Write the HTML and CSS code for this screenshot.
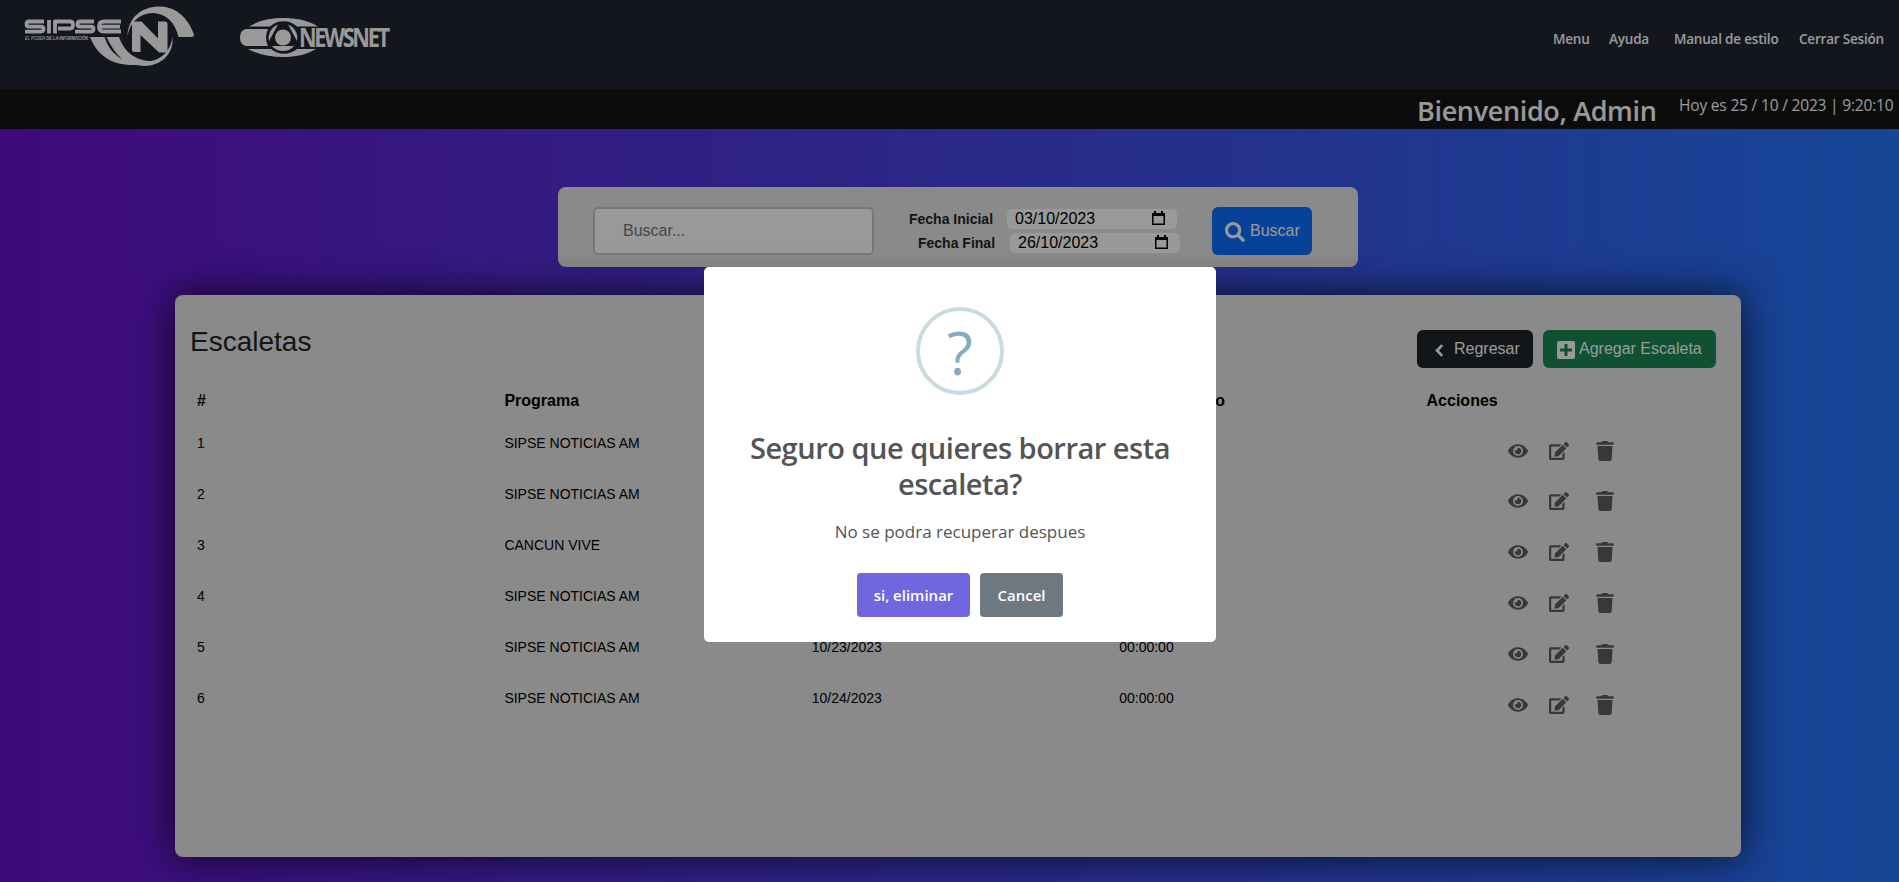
FILE: index.html
```html
<!DOCTYPE html>
<html lang="es">
<head>
<meta charset="utf-8">
<title>Escaletas</title>
<link rel="stylesheet" href="styles.css">
</head>
<body>
<svg width="0" height="0" class="defs">
  <symbol id="eye" viewBox="0 0 576 512"><path d="M572.5 241.400C518.300 135.600 410.900 64 288 64S57.700 135.600 3.500 241.400a32.350 32.350 0 0 0 0 29.200C57.700 376.400 165.100 448 288 448s230.300-71.600 284.500-177.400a32.350 32.350 0 0 0 0-29.200zM288 400a144 144 0 1 1 144-144 143.930 143.930 0 0 1-144 144zm0-240a95.300 95.300 0 0 0-25.300 3.800 47.850 47.850 0 0 1-66.900 66.900A95.800 95.800 0 1 0 288 160z"/></symbol>
  <symbol id="edit" viewBox="0 0 576 512"><path d="M402.600 83.200l90.200 90.200c3.800 3.800 3.800 10 0 13.800L274.400 405.600l-92.800 10.300c-12.400 1.400-22.900-9.100-21.500-21.500l10.300-92.800L388.800 83.200c3.800-3.800 10-3.800 13.800 0zm162-22.900l-48.800-48.800c-15.200-15.200-39.900-15.200-55.200 0l-35.400 35.400c-3.800 3.800-3.800 10 0 13.800l90.200 90.200c3.800 3.800 10 3.800 13.800 0l35.400-35.400c15.200-15.300 15.200-40 0-55.200zM384 346.200V448H64V128h229.800c3.200 0 6.200-1.300 8.500-3.500l40-40c7.600-7.600 2.200-20.500-8.500-20.500H48C21.500 64 0 85.500 0 112v352c0 26.500 21.500 48 48 48h352c26.500 0 48-21.500 48-48V306.200c0-10.700-12.900-16-20.500-8.500l-40 40c-2.200 2.300-3.500 5.300-3.500 8.500z"/></symbol>
  <symbol id="trash" viewBox="0 0 448 512"><path d="M432 32H312l-9.400-18.700A24 24 0 0 0 281.100 0H166.800a23.720 23.720 0 0 0-21.400 13.300L136 32H16A16 16 0 0 0 0 48v32a16 16 0 0 0 16 16h416a16 16 0 0 0 16-16V48a16 16 0 0 0-16-16zM53.200 467a48 48 0 0 0 47.900 45h245.800a48 48 0 0 0 47.900-45L416 128H32z"/></symbol>
</svg>

<header class="navbar">
  <svg class="logo-sipse" viewBox="0 0 190 72" fill="#fff">
    <g fill="none" stroke="#fff" stroke-width="3.800" stroke-linejoin="round">
      <path d="M29 21.500H14q-2.500 0-2.500 2.600t2.500 2.600h12q2.500 0 2.500 2.400t-2.500 2.500H10"/>
      <path d="M34 20v13.500M40 33.500v-12H55q3 0 3 3.500t-3 3.500H43"/>
      <path d="M79 21.500H65q-2.500 0-2.500 2.600t2.500 2.600h11q2.500 0 2.500 2.400t-2.500 2.500H60"/>
      <path d="M106 21.500H89q-5 0-5 5t5 5h17M85 26.600h20"/>
    </g>
    <text x="10" y="40.300" class="logo-tag" textLength="63" lengthAdjust="spacingAndGlyphs">EL PODER <tspan font-weight="700">DE LA INFORMACIÓN</tspan></text>
    <path d="M112.500 36C113 17 127 6.500 145 6.500C163 7 174 20 179 34.500Q179 37 176 37H163.500C160 22 151 13 137 13C124 14 115 22 112.500 36Z"/>
    <path d="M75 37H89.500C93 47 98 54 107 59Q98 51 91.500 37H104C109 52 121 61 136 61C148 59 156 49 157.500 37C159 54 146 66 129 66Q123 65 118 65C96 65 82 55 75 37Z"/>
    <path d="M117 50V24q0-2.500 2.500-2.500h7l16.500 17V21.500H150q2.500 0 2.500 2.500v26q0 2.500-2.500 2.500h-6L125.500 35V52h-6q-2.500 0-2.500-2Z"/>
  </svg>
  <svg class="logo-newsnet" viewBox="0 0 170 55" fill="#fff">
    <path d="M19 16.500C30 10 41 8 53 8s25 2 35 8.500H67A20 20 0 0 0 40 16.500ZM18 39H41A20 20 0 0 0 67 39H86C76 45 65 47 53 47S29 45 18 39ZM16 19H38A20 20 0 0 0 38 36H16Q10 35 10 27.500T16 19Z"/>
    <path d="M48 14.500L39 31A14.500 14.500 0 0 1 48 14.500ZM58 14.500L67 31A14.500 14.500 0 0 0 58 14.500ZM42 36H64Q60 41 53 41T42 36Z"/>
    <circle cx="53" cy="27.500" r="8"/>
    <text transform="translate(69 36.700) scale(.82 1)" class="logo-word" textLength="111" lengthAdjust="spacing">NEWSNET</text>
  </svg>
  <nav class="nav">
    <a style="width:36px">Menu</a><a style="width:41px">Ayuda</a><a style="width:105px">Manual de estilo</a><a style="width:84px">Cerrar Sesión</a>
  </nav>
</header>

<div class="welcome">
  <h2>Bienvenido, Admin</h2>
  <span>Hoy es 25 / 10 / 2023 | 9:20:10</span>
</div>

<main>
  <form class="search">
    <div class="query">Buscar...</div>
    <div class="dates">
      <div class="date-row"><b>Fecha Inicial</b><span class="date">03/10/2023<svg viewBox="0 0 13 15"><path d="M0 2h2V0h2v2h5V0h2v2h2v12H0zM1.500 5v7.500h10V5z" fill-rule="evenodd"/></svg></span></div>
      <div class="date-row second"><b>Fecha Final</b><span class="date">26/10/2023<svg viewBox="0 0 13 15"><path d="M0 2h2V0h2v2h5V0h2v2h2v12H0zM1.500 5v7.500h10V5z" fill-rule="evenodd"/></svg></span></div>
    </div>
    <div class="btn find"><svg viewBox="0 0 512 512"><path d="M505 442.700L405.300 343c-4.500-4.500-10.600-7-17-7H372c27.600-35.300 44-79.700 44-128C416 93.100 322.900 0 208 0S0 93.100 0 208s93.100 208 208 208c48.300 0 92.700-16.400 128-44v16.300c0 6.400 2.500 12.500 7 17l99.700 99.700c9.400 9.400 24.600 9.400 33.900 0l28.300-28.300c9.400-9.400 9.400-24.600.1-34zM208 336c-70.700 0-128-57.200-128-128 0-70.700 57.200-128 128-128 70.700 0 128 57.200 128 128 0 70.700-57.200 128-128 128z"/></svg>Buscar</div>
  </form>

  <section class="card">
    <div class="card-head">
      <h1>Escaletas</h1>
      <div class="buttons">
        <div class="btn back"><svg viewBox="0 0 8 12"><path d="M6.500 1L1.700 6l4.800 5" fill="none" stroke="#fff" stroke-width="2.500"/></svg>Regresar</div>
        <div class="btn add"><svg viewBox="0 0 18 18"><path fill-rule="evenodd" d="M2 0h14q2 0 2 2v14q0 2-2 2H2q-2 0-2-2V2q0-2 2-2zM7.500 3v4.500H3v3h4.500V15h3v-4.500H15v-3h-4.500V3z"/></svg>Agregar Escaleta</div>
      </div>
    </div>
    <table>
      <thead><tr><th>#</th><th>Programa</th><th>Fecha</th><th>Hora de Inicio</th><th>Acciones</th></tr></thead>
      <tbody>
        <tr><td>1</td><td>SIPSE NOTICIAS AM</td><td>10/19/2023</td><td>00:00:00</td><td class="actions"><div><svg class="eye"><use href="#eye"/></svg><svg class="edit"><use href="#edit"/></svg><svg class="trash"><use href="#trash"/></svg></div></td></tr>
        <tr><td>2</td><td>SIPSE NOTICIAS AM</td><td>10/20/2023</td><td>00:00:00</td><td class="actions"><div><svg class="eye"><use href="#eye"/></svg><svg class="edit"><use href="#edit"/></svg><svg class="trash"><use href="#trash"/></svg></div></td></tr>
        <tr><td>3</td><td>CANCUN VIVE</td><td>10/20/2023</td><td>00:00:00</td><td class="actions"><div><svg class="eye"><use href="#eye"/></svg><svg class="edit"><use href="#edit"/></svg><svg class="trash"><use href="#trash"/></svg></div></td></tr>
        <tr><td>4</td><td>SIPSE NOTICIAS AM</td><td>10/23/2023</td><td>00:00:00</td><td class="actions"><div><svg class="eye"><use href="#eye"/></svg><svg class="edit"><use href="#edit"/></svg><svg class="trash"><use href="#trash"/></svg></div></td></tr>
        <tr><td>5</td><td>SIPSE NOTICIAS AM</td><td>10/23/2023</td><td>00:00:00</td><td class="actions"><div><svg class="eye"><use href="#eye"/></svg><svg class="edit"><use href="#edit"/></svg><svg class="trash"><use href="#trash"/></svg></div></td></tr>
        <tr><td>6</td><td>SIPSE NOTICIAS AM</td><td>10/24/2023</td><td>00:00:00</td><td class="actions"><div><svg class="eye"><use href="#eye"/></svg><svg class="edit"><use href="#edit"/></svg><svg class="trash"><use href="#trash"/></svg></div></td></tr>
      </tbody>
    </table>
  </section>
</main>

<div class="overlay">
  <div class="modal">
    <div class="question">?</div>
    <h2>Seguro que quieres borrar esta<br>escaleta?</h2>
    <p>No se podra recuperar despues</p>
    <div class="modal-actions"><button class="confirm">si, eliminar</button><button class="cancel">Cancel</button></div>
  </div>
</div>
</body>
</html>
```
FILE: styles.css
```css
* { box-sizing: border-box; }
body {
  margin: 0;
  height: 882px;
  overflow: hidden;
  display: flex;
  flex-direction: column;
  font-family: "Liberation Sans", Arial, sans-serif;
  font-size: 16px;
  color: #212529;
  background: #2575fc;
}
h1, h2, p { margin: 0; }
.defs { position: absolute; }

.navbar {
  height: 89px;
  flex: none;
  display: flex;
  align-items: flex-start;
  padding-left: 15px;
  background: #212631;
}
.logo-sipse { width: 190px; height: 72px; }
.logo-newsnet { width: 170px; height: 55px; margin: 10px 0 0 25px; overflow: visible; }
.logo-tag { font: italic 4.500px "Liberation Sans", sans-serif; }
.logo-word { font: 700 26.500px "Open Sans", sans-serif; }
.nav {
  margin-left: auto;
  padding: 29px 16px 0 0;
  display: flex;
  font: 600 13.500px/20px "Open Sans", sans-serif;
  letter-spacing: -0.200px;
  color: #fff;
  white-space: nowrap;
}
.nav a { margin-left: 20px; }
.nav a:nth-child(3) { margin-left: 24px; }

.welcome {
  height: 40px;
  flex: none;
  display: flex;
  justify-content: flex-end;
  padding-right: 6px;
  color: #fff;
  background: #151515;
  font-family: "Open Sans", sans-serif;
  white-space: nowrap;
}
.welcome h2 { font-size: 27px; font-weight: 600; line-height: 44px; width: 241px; letter-spacing: -0.350px; }
.welcome span { width: 214px; margin-left: 21px; font-size: 15.500px; line-height: 33px; letter-spacing: -0.180px; }

main {
  flex: 1;
  display: flex;
  flex-direction: column;
  align-items: center;
  padding: 58px 0 0 17px;
  background: linear-gradient(to right, #6a11cb, #2575fc);
}
.search {
  width: 800px;
  height: 80px;
  padding: 20px 35px;
  display: flex;
  border-radius: 8px;
  background: #e6e6e6;
}
.query {
  width: 281px;
  height: 48px;
  border: 2px solid #c8c8c8;
  border-radius: 5px;
  background: #fff;
  padding-left: 28px;
  line-height: 43px;
  color: #75797e;
}
.dates { width: 273px; margin: 2px 0 0 35px; display: grid; gap: 4px; align-content: start; }
.date-row { display: flex; height: 20px; align-items: center; }
.date-row b { width: 98px; font-size: 14px; }
.date-row.second { padding-left: 9px; }
.date-row.second b { width: 92px; }
.date {
  width: 170px;
  height: 20px;
  display: flex;
  justify-content: space-between;
  align-items: center;
  padding: 0 12px 1px 8px;
  border-radius: 5px;
  background: #fff;
  color: #000;
}
.date svg { width: 13px; height: 15px; }
.btn { display: flex; align-items: center; border-radius: 6px; color: #fff; fill: #fff; white-space: nowrap; }
.find { width: 100px; height: 48px; margin-left: 30px; padding: 0 0 1px 13px; background: #0d6efd; }
.find svg { width: 20px; height: 20px; margin: 3px 5px 0 0; }

.card {
  width: 1566px;
  height: 562px;
  margin-top: 28px;
  padding: 0 14px;
  border-radius: 8px;
  background: #e6e6e6;
  box-shadow: 0 0 40px rgba(0, 0, 0, .75);
}
.card-head { height: 82px; display: flex; justify-content: space-between; }
.card-head h1 { font-size: 28px; font-weight: 400; line-height: 34px; margin: 30px 0 0 1px; }
.buttons { display: flex; gap: 10px; margin: 35px 11px 0 0; }
.buttons .btn { height: 38px; padding-bottom: 1px; }
.back { width: 116px; padding-left: 18px; background: #212529; }
.back svg { width: 9px; height: 13px; margin: 3px 10px 0 0; }
.add { width: 173px; padding-left: 14px; background: #198754; }
.add svg { width: 18px; height: 18px; margin: 2px 4px 0 0; }

table { width: 1537px; border-collapse: collapse; table-layout: fixed; color: #000; }
th { height: 45px; padding: 3px 8px 0; vertical-align: middle; text-align: left; font-size: 16px; border-bottom: 1px solid #e0e1e2; }
td { height: 51px; padding: 12px 8px; vertical-align: top; font-size: 14px; line-height: 16px; border-bottom: 1px solid #e0e1e2; }
td.actions { border-bottom: 0; padding: 17px 0 0 89px; }
.actions div { display: flex; align-items: center; height: 22px; fill: #5e5e5e; }
.eye { width: 20px; height: 18px; }
.edit { width: 20px; height: 18px; margin-left: 21px; }
.trash { width: 18px; height: 20px; margin-left: 27px; }

.overlay {
  position: fixed;
  inset: 0;
  display: flex;
  justify-content: center;
  align-items: center;
  padding: 27px 0 0 21px;
  background: rgba(0, 0, 0, .4);
}
.modal {
  width: 512px;
  height: 375px;
  display: flex;
  flex-direction: column;
  align-items: center;
  border-radius: 5px;
  background: #fff;
  font-family: "Open Sans", sans-serif;
  color: #545454;
}
.question {
  width: 88px;
  height: 88px;
  margin-top: 40px;
  border: 4px solid #c9dae1;
  border-radius: 50%;
  color: #87adbd;
  font-size: 60px;
  line-height: 83px;
  text-align: center;
}
.modal h2 { margin-top: 35px; font-size: 29px; font-weight: 600; line-height: 36px; letter-spacing: -0.480px; text-align: center; white-space: nowrap; }
.modal p { margin-top: 17px; font-size: 17px; line-height: 26px; }
.modal-actions { display: flex; gap: 10px; margin-top: 28px; }
.modal button { height: 44px; padding: 0; border: 0; border-radius: 4px; color: #fff; font: 600 15px "Open Sans", sans-serif; }
.confirm { width: 113px; background: #7066e0; }
.modal .cancel { width: 83px; }
.cancel { background: #6e7881; }
```
